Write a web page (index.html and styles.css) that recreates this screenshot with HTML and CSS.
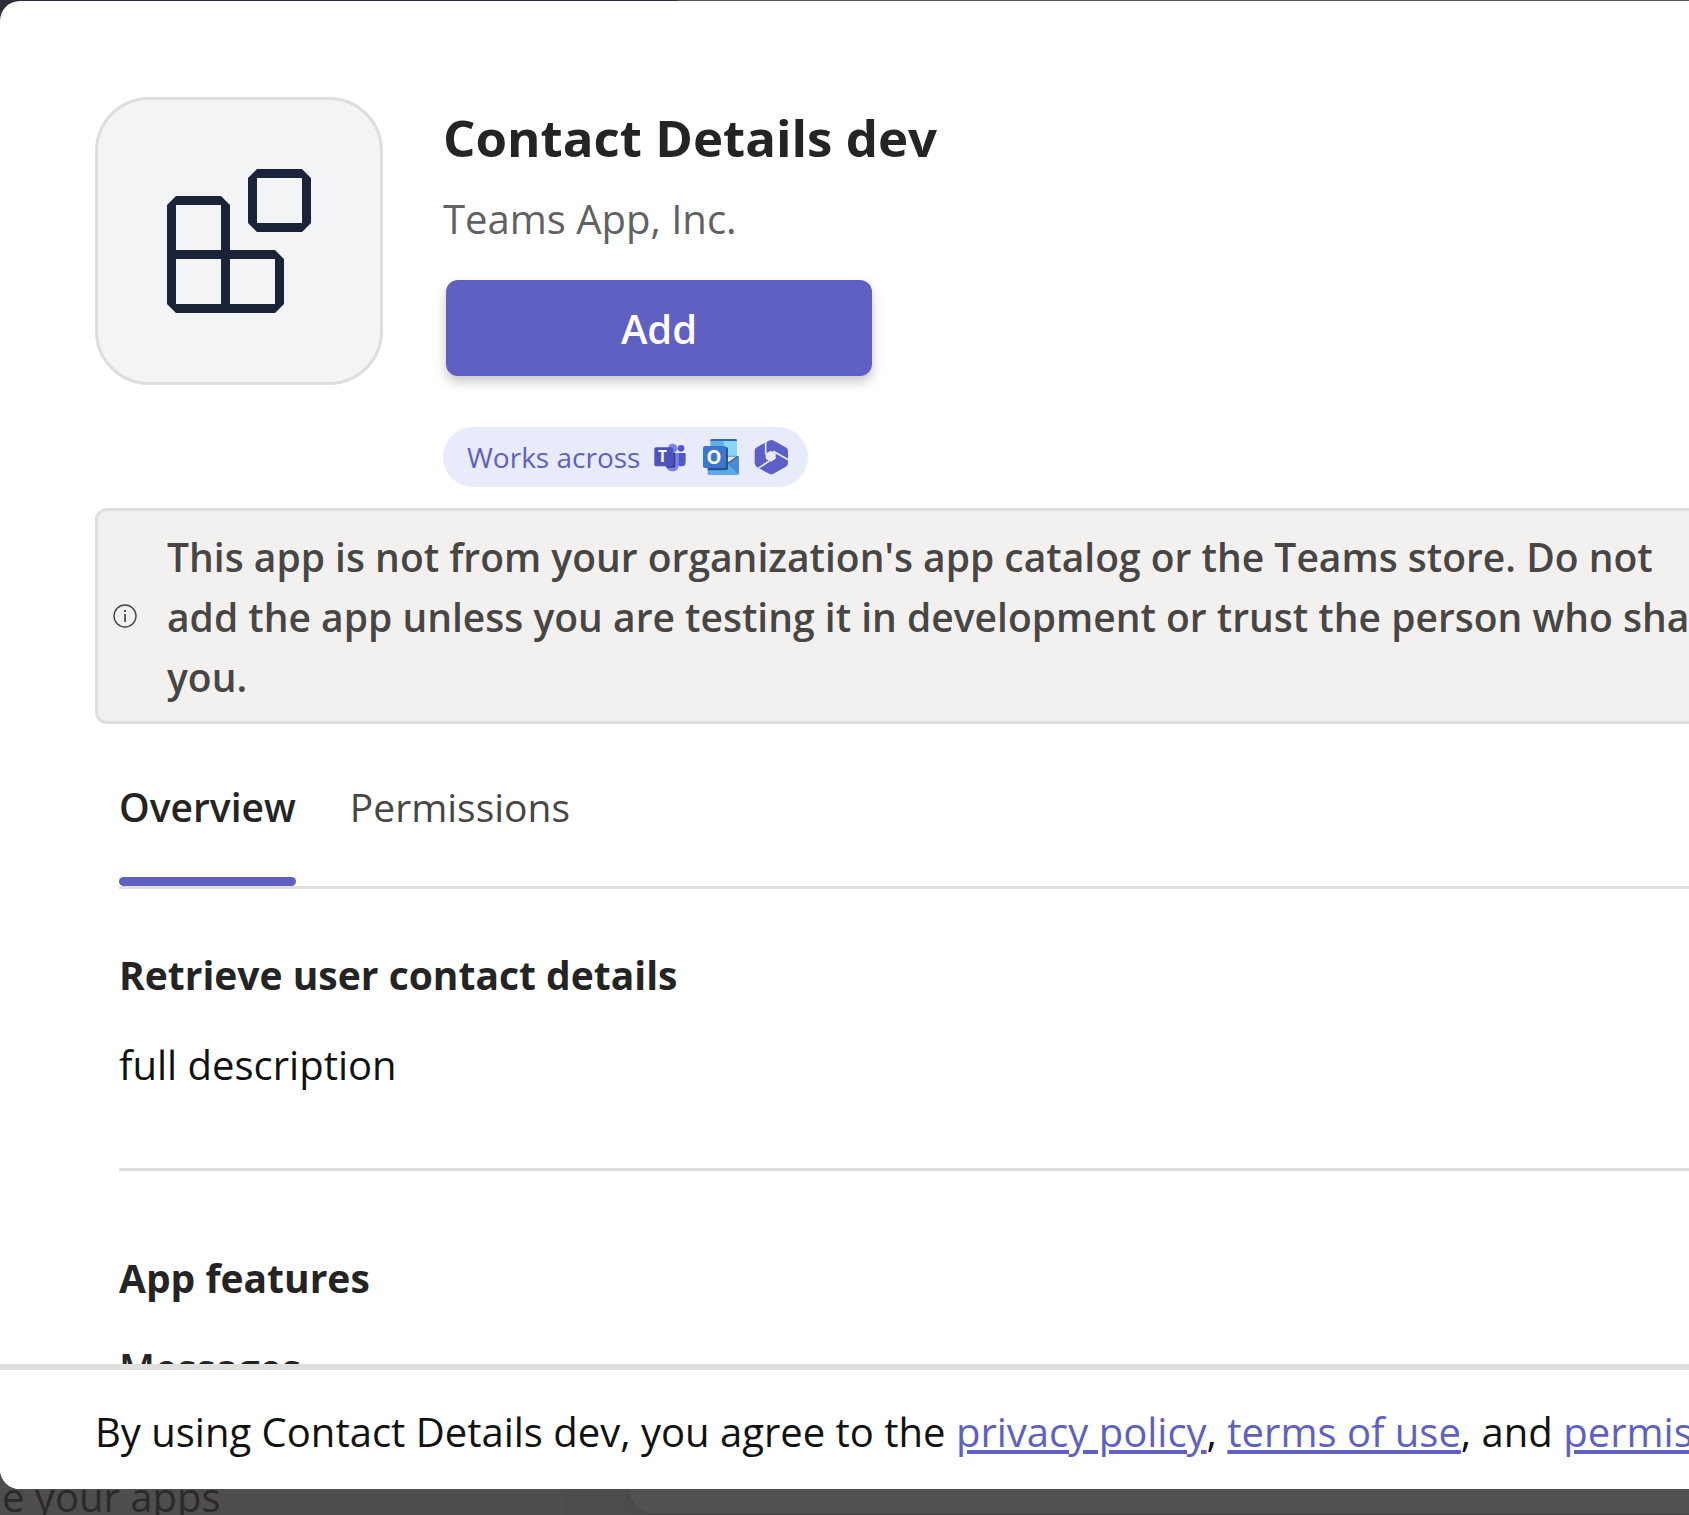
FILE: index.html
```html
<!DOCTYPE html>
<html lang="en">
<head>
<meta charset="utf-8">
<title>Contact Details dev</title>
<link rel="stylesheet" href="styles.css">
</head>
<body>
<div class="backdrop" aria-hidden="true">
  <div class="backdrop-top"></div>
  <div class="backdrop-side">e your apps</div>
  <div class="backdrop-main"><div class="backdrop-card"></div></div>
</div>
<main class="dialog" role="dialog" aria-labelledby="app-name">
  <div class="dialog-body">
    <header class="app-header">
      <div class="app-icon">
        <svg viewBox="0 0 16 16" width="144" height="144" aria-hidden="true">
          <path fill="#1b2338" fill-rule="evenodd" d="M1 3h5l1 1v5h5l1 1v5l-1 1H1l-1-1V4zM1 4v5h5V4zM1 10v5h5v-5zM7 10v5h5v-5zM10 0h5l1 1v5l-1 1h-5L9 6V1zM10 1v5h5V1z"/>
        </svg>
      </div>
      <div class="app-info">
        <h1 class="app-name" id="app-name">Contact Details dev</h1>
        <p class="app-publisher">Teams App, Inc.</p>
        <button class="add-button" type="button">Add</button>
        <div class="works-across">
          <span class="works-label">Works across</span>
          <div class="works-icons">
            <svg viewBox="0 0 108 108" width="36" height="36" role="img" aria-label="Teams">
              <circle cx="62" cy="28" r="14" fill="#7b83eb"/>
              <circle cx="87" cy="28" r="10" fill="#5059c9"/>
              <path fill="#5059c9" d="M74 42h23q4 0 4 4v22q0 14-13 14-14 0-14-14z"/>
              <path fill="#7b83eb" d="M42 42h38v35q0 20-19 20-15 0-19-15z"/>
              <path fill="#3a3f94" d="M55 42h15v39q0 5-5 5H43V78z"/>
              <rect x="7" y="25" width="57" height="57" rx="5" fill="#4b53bc"/>
              <text class="logo-letter" x="31" y="69" font-size="46">T</text>
            </svg>
            <svg viewBox="0 0 108 108" width="36" height="36" role="img" aria-label="Outlook">
              <path fill="#62b0e8" d="M26 0h72q4 0 4 4v50H22V4q0-4 4-4z"/>
              <path fill="#86d5fb" d="M62 6h40v44H62z"/>
              <path fill="#3069b4" d="M26 0h72q4 0 4 6H22q0-6 4-6z"/>
              <path fill="#5fa9e6" d="M14 80h60l34-25v49q0 4-4 4H18q-4 0-4-4z"/>
              <path fill="#4a8bd6" d="M74 76l34-21v50z"/>
              <path fill="#2a5c9f" d="M72 72l32-22 4 4-34 22z"/>
              <path fill="#27548f" d="M18 24h51q6 0 6 6v58q0 6-6 6H14V84z"/>
              <rect y="21" width="69" height="66" rx="6" fill="#3b77cf"/>
              <text class="logo-letter" x="33" y="74" font-size="56">O</text>
            </svg>
            <svg viewBox="0 0 108 108" width="36" height="36" role="img" aria-label="Microsoft 365">
              <path fill="#5b5fc7" stroke="#5b5fc7" stroke-width="26" stroke-linejoin="round" d="M52 16l37 20v36L52 93 15 73V36z"/>
              <path fill="none" stroke="#e8ebfa" stroke-width="5" d="M35 0v44M58 37l50 28M46 66L12 88"/>
              <path fill="#e8ebfa" d="M34 44l16-9 15 8v16l-14 9-15-7z"/>
            </svg>
          </div>
        </div>
      </div>
    </header>
    <div class="notice" role="note">
      <svg class="notice-icon" viewBox="0 0 24 24" width="24" height="24" aria-hidden="true">
        <circle cx="12" cy="12" r="11" fill="none" stroke="#484644" stroke-width="1.4"/>
        <path fill="#484644" d="M11.2 10h1.7v8h-1.7zM11 6h2v2h-2z"/>
      </svg>
      <p class="notice-text">This app is not from your organization's app catalog or the Teams store. Do not<br>add the app unless you are testing it in development or trust the person who shared it with<br>you.</p>
    </div>
    <div class="details">
      <div class="tabs" role="tablist">
        <button class="tab tab-active" type="button" role="tab" aria-selected="true">Overview</button>
        <button class="tab" type="button" role="tab" aria-selected="false">Permissions</button>
      </div>
      <section class="summary">
        <h2 class="section-title">Retrieve user contact details</h2>
        <p class="description">full description</p>
      </section>
      <section class="features">
        <h2 class="section-title">App features</h2>
        <h3 class="feature-title">Messages</h3>
      </section>
    </div>
  </div>
  <footer class="legal">By using Contact Details dev, you agree to the <a href="#privacy">privacy policy</a>, <a href="#terms">terms of use</a>, and <a href="#permissions">permissions</a></footer>
</main>
</body>
</html>
```
FILE: styles.css
```css
* {
  box-sizing: border-box;
}

body {
  margin: 0;
  height: 100vh;
  overflow: hidden;
  background: #4e4c4c;
  color: #242424;
  font-family: "Open Sans", "Noto Sans", sans-serif;
  font-size: 40px;
  line-height: 60px;
}

h1, h2, h3, p {
  margin: 0;
}

h2, h3 {
  font-size: 39px;
}

button {
  border: 0;
  padding: 0;
  font: inherit;
}

/* Dimmed page behind the dialog */
.backdrop {
  position: absolute;
  inset: 0;
  display: grid;
  grid-template-columns: 565px 1fr;
  grid-template-rows: 1fr 60px;
  overflow: hidden;
}

.backdrop-top {
  grid-column: 1 / -1;
  background: linear-gradient(90deg, #2f2b3d 677px, #555555 677px);
}

.backdrop-side {
  padding-left: 2px;
  background: #4f4d4d;
  color: #2b2a2a;
  line-height: 84px;
}

.backdrop-main {
  padding: 0 0 2px 64px;
  background: #4d4c4c;
}

.backdrop-card {
  height: 100%;
  border-bottom-left-radius: 24px;
  background: #525252;
  box-shadow: 0 0 4px #444444;
}

/* Dialog, wider than the window */
.dialog {
  position: relative;
  display: flex;
  flex-direction: column;
  width: calc(100% + 420px);
  height: calc(100vh - 27px);
  margin-top: 1px;
  border-radius: 20px;
  background: #ffffff;
  overflow: hidden;
}

.dialog-body {
  flex: 1;
  min-height: 0;
  padding: 96px 95px 0;
  overflow: hidden;
}

.app-header {
  display: flex;
  gap: 60px;
}

.app-icon {
  display: grid;
  place-items: center;
  flex: none;
  width: 288px;
  height: 288px;
  border: 3px solid #dddee0;
  border-radius: 54px;
  background: #f2f4f6;
}

.app-name {
  font-size: 51px;
  line-height: 80px;
}

.app-publisher {
  margin-top: 12px;
  color: #616161;
}

.add-button {
  display: block;
  width: 426px;
  height: 96px;
  margin: 31px 0 0 3px;
  padding-top: 2px;
  border-radius: 12px;
  background: #5f60c2;
  box-shadow: 0 6px 12px rgba(0, 0, 0, 0.22);
  color: #ffffff;
  font-weight: 600;
}

.works-across {
  display: flex;
  align-items: center;
  gap: 12px;
  width: max-content;
  height: 60px;
  margin-top: 51px;
  padding: 0 18px 0 24px;
  border-radius: 30px;
  background: #e8ebfa;
}

.works-label {
  color: #5f60c2;
  font-size: 28px;
}

.works-icons {
  display: flex;
  gap: 15px;
}

.logo-letter {
  fill: #ffffff;
  font-weight: 700;
  text-anchor: middle;
}

.notice {
  display: flex;
  align-items: center;
  gap: 30px;
  margin-top: 21px;
  padding: 0 15px;
  border: 3px solid #dfdedd;
  border-radius: 12px;
  background: #f3f1ef;
  color: #484644;
  font-size: 39px;
  font-weight: 600;
  white-space: nowrap;
}

.notice-icon {
  flex: none;
}

.notice-text {
  padding: 16px 0 14px;
}

.details {
  padding: 53px 0 0 24px;
}

.tabs {
  display: flex;
  gap: 54px;
  border-bottom: 3px solid #dfdedd;
}

.tab {
  display: flex;
  flex-direction: column;
  gap: 40px;
  background: none;
  color: #484644;
  font-size: 39px;
}

.tab::after {
  content: "";
  width: 100%;
  height: 9px;
  border-radius: 5px;
}

.tab-active {
  color: #242424;
  font-weight: 600;
}

.tab-active::after {
  background: #5f60c2;
}

.summary {
  padding: 56px 0 73px;
  border-bottom: 3px solid #dfdedd;
}

.description {
  margin-top: 30px;
  color: #111111;
}

.features {
  padding-top: 77px;
}

.feature-title {
  margin-top: 30px;
  font-weight: 600;
}

.legal {
  flex: none;
  padding: 32px 95px 27px;
  border-top: 6px solid #dfdfdd;
  background: #ffffff;
  color: #111111;
  white-space: nowrap;
}

.legal a {
  color: #5f60c2;
  text-decoration-thickness: 4px;
  text-underline-offset: 3px;
}
```
